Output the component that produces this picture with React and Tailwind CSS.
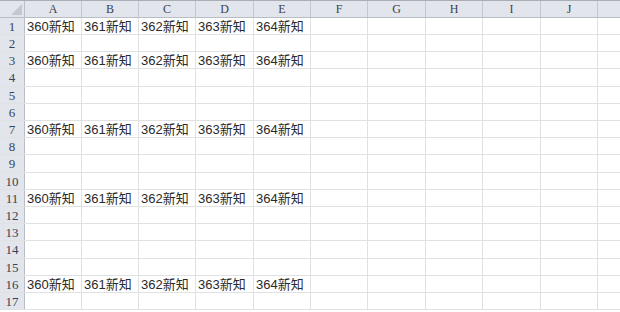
const cols = ['A', 'B', 'C', 'D', 'E', 'F', 'G', 'H', 'I', 'J', ''];
const widths = ['w-[57px]', 'w-[57px]', 'w-[57px]', 'w-[58px]', 'w-[57px]', 'w-[57px]', 'w-[58px]', 'w-[57px]', 'w-[58px]', 'w-[57px]', 'w-[40px]'];
const heights = ['h-[17px]', 'h-[17px]', 'h-[17px]', 'h-[18px]', 'h-[17px]'];
const filled = [1, 3, 7, 11, 16];

function App() {
  const rows = Array.from({ length: 17 }, (_, i) => i + 1);
  return (
    <div className="w-[620px] h-[312px] overflow-hidden bg-white text-[13px] text-[#2a2a2a]" style={{ fontFamily: '"Liberation Serif", "Noto Sans CJK SC", serif' }}>
      <div className="flex h-[18px] bg-[#e2e6ec] border-b border-[#b9bec6] border-t border-t-[#a9aeb6]">
        <div className="w-[25px] shrink-0 border-r border-[#b9bec6] relative">
          <svg className="absolute right-[2px] bottom-[2px]" width="11" height="11" viewBox="0 0 11 11">
            <polygon points="11,0 11,11 0,11" fill="#c3c8cf" />
          </svg>
        </div>
        {cols.map((c, i) => (
          <div key={i} className={`${widths[i]} shrink-0 border-r border-[#c3c8cf] flex items-center justify-center text-[12px] text-[#3b4252] leading-none`}>
            {c}
          </div>
        ))}
      </div>
      {rows.map((r, ri) => (
        <div key={r} className={`flex ${heights[ri % 5]} border-b border-[#dfe1e3]`}>
          <div className="w-[25px] shrink-0 bg-[#e2e6ec] border-r border-[#b9bec6] flex items-center justify-center text-[13px] text-[#3b4252] leading-none">
            {r}
          </div>
          {cols.map((c, i) => (
            <div key={i} className={`${widths[i]} shrink-0 border-r border-[#dfe1e3] flex items-center pl-[2px] whitespace-nowrap leading-none`} style={{ fontFamily: '"Liberation Sans", "Noto Sans CJK SC", sans-serif' }}>
              {filled.includes(r) && i < 5 ? `${360 + i}新知` : ''}
            </div>
          ))}
        </div>
      ))}
    </div>
  );
}

export default App
